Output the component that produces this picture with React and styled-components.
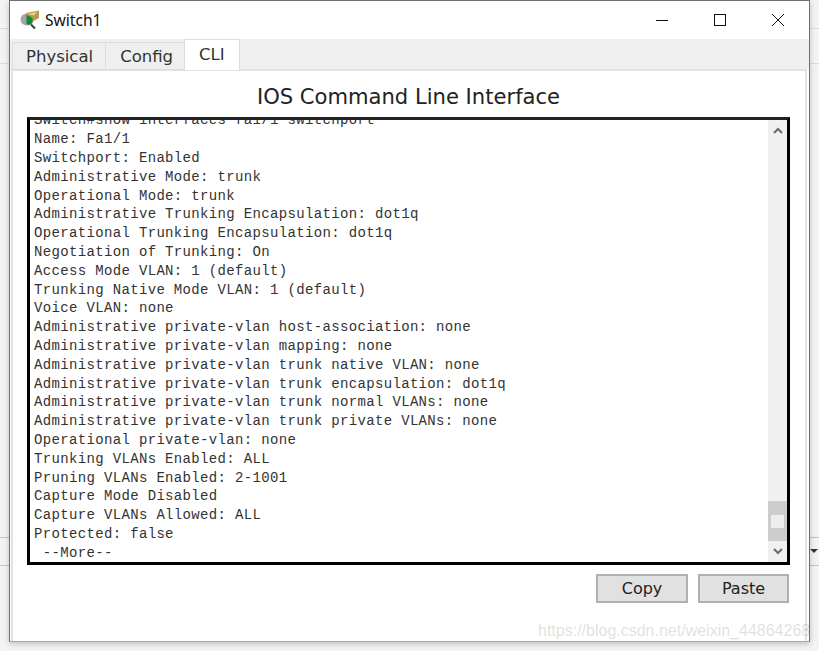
import React from 'react';
import styled, { createGlobalStyle } from 'styled-components';

const CLI_LINES = [
  'Name: Fa1/1',
  'Switchport: Enabled',
  'Administrative Mode: trunk',
  'Operational Mode: trunk',
  'Administrative Trunking Encapsulation: dot1q',
  'Operational Trunking Encapsulation: dot1q',
  'Negotiation of Trunking: On',
  'Access Mode VLAN: 1 (default)',
  'Trunking Native Mode VLAN: 1 (default)',
  'Voice VLAN: none',
  'Administrative private-vlan host-association: none',
  'Administrative private-vlan mapping: none',
  'Administrative private-vlan trunk native VLAN: none',
  'Administrative private-vlan trunk encapsulation: dot1q',
  'Administrative private-vlan trunk normal VLANs: none',
  'Administrative private-vlan trunk private VLANs: none',
  'Operational private-vlan: none',
  'Trunking VLANs Enabled: ALL',
  'Pruning VLANs Enabled: 2-1001',
  'Capture Mode Disabled',
  'Capture VLANs Allowed: ALL',
  'Protected: false',
  ' --More--',
];

const TABS = [
  { name: 'Physical', left: 13, right: 12 },
  { name: 'Config', left: 14, right: 11 },
  { name: 'CLI', left: 14, right: 14 },
];

function App() {
  return (
    <Desktop>
      <GlobalStyle />
      <Window>
        <TitleBar>
          <WindowIcon />
          <TitleText>Switch1</TitleText>
          <WindowControls>
            <ControlBtn>
              <svg width="14" height="14" viewBox="0 0 14 14">
                <path d="M1 7.5h12" stroke="#111" strokeWidth="1" />
              </svg>
            </ControlBtn>
            <ControlBtn>
              <svg width="14" height="14" viewBox="0 0 14 14">
                <rect x="1.5" y="1.5" width="11" height="11" fill="none" stroke="#111" strokeWidth="1" />
              </svg>
            </ControlBtn>
            <ControlBtn>
              <svg width="14" height="14" viewBox="0 0 14 14">
                <path d="M1 1l12 12M13 1L1 13" stroke="#111" strokeWidth="1" />
              </svg>
            </ControlBtn>
          </WindowControls>
        </TitleBar>
        <TabStrip>
          {TABS.map(tab => (
            <Tab key={tab.name} $active={tab.name === 'CLI'} $left={tab.left} $right={tab.right}>
              {tab.name}
            </Tab>
          ))}
        </TabStrip>
        <Panel>
          <Heading>IOS Command Line Interface</Heading>
          <Terminal>
            <Output>
              <ClippedLine>Switch#show interfaces fa1/1 switchport</ClippedLine>
              {CLI_LINES.map((line, idx) => (
                <Line key={idx}>{line}</Line>
              ))}
            </Output>
            <ScrollBar>
              <ArrowBox>
                <svg width="10" height="7" viewBox="0 0 10 7">
                  <path d="M1 6l4-4 4 4" fill="none" stroke="#6a6a6a" strokeWidth="2" />
                </svg>
              </ArrowBox>
              <Track>
                <Thumb>
                  <Grip />
                </Thumb>
              </Track>
              <ArrowBox>
                <svg width="10" height="7" viewBox="0 0 10 7">
                  <path d="M1 1l4 4 4-4" fill="none" stroke="#6a6a6a" strokeWidth="2" />
                </svg>
              </ArrowBox>
            </ScrollBar>
          </Terminal>
          <ButtonRow>
            <ActionBtn $width={92}>Copy</ActionBtn>
            <ActionBtn $width={91}>Paste</ActionBtn>
          </ButtonRow>
        </Panel>
        <Watermark>https://blog.csdn.net/weixin_44864268</Watermark>
      </Window>
      <SideCaret />
    </Desktop>
  );
}

function WindowIcon() {
  return (
    <IconSvg width="20" height="20" viewBox="0 0 20 20">
      <ellipse cx="7" cy="9.5" rx="6.5" ry="6" fill="#a3a3a3" />
      <path d="M11 14.5l4 4" stroke="#3f3f3f" strokeWidth="2" />
      <path d="M6 3l13-2.5v7.5l-8 4.5z" fill="#b99a4c" />
      <path d="M7 4l10-2-3 3.5z" fill="#e6d48d" />
      <path d="M6.5 4.5l6 3.5v5l-3 2-3-1z" fill="#14873a" />
    </IconSvg>
  );
}

export default App;

const GlobalStyle = createGlobalStyle`
  html, body {
    margin: 0;
    padding: 0;
    background: #f3f3f3;
  }
`;

const Desktop = styled.div`
  position: relative;
  width: 819px;
  height: 651px;
  overflow: hidden;
  padding: 0 0 0 9px;
  box-sizing: border-box;
  background:
    linear-gradient(#dcdcdc, #dcdcdc) 0 28px / 100% 1px no-repeat,
    linear-gradient(#dcdcdc, #dcdcdc) 0 63px / 100% 1px no-repeat,
    linear-gradient(#c4c4c4, #c4c4c4) 0 537px / 100% 1px no-repeat,
    linear-gradient(#c4c4c4, #c4c4c4) 0 565px / 100% 1px no-repeat,
    #f4f4f4;
`;

const Window = styled.div`
  position: relative;
  width: 801px;
  height: 642px;
  box-sizing: border-box;
  border: 1px solid #6f6f6f;
  border-bottom-color: #a8a8a8;
  background: #fff;
  display: flex;
  flex-direction: column;
  overflow: hidden;
  box-shadow: 0 2px 6px rgba(0, 0, 0, 0.22);
`;

const TitleBar = styled.div`
  height: 38px;
  flex: none;
  display: flex;
  align-items: center;
  padding-left: 10px;
  background: #fff;
`;

const IconSvg = styled.svg`
  flex: none;
  margin-right: 5px;
`;

const TitleText = styled.span`
  font-family: 'Noto Sans', sans-serif;
  font-size: 15.6px;
  color: #111;
`;

const WindowControls = styled.div`
  margin-left: auto;
  display: flex;
  padding-right: 2px;
`;

const ControlBtn = styled.div`
  width: 58px;
  height: 38px;
  display: flex;
  align-items: center;
  justify-content: center;
`;

const TabStrip = styled.div`
  height: 31px;
  flex: none;
  display: flex;
  align-items: flex-end;
  padding-left: 2px;
  background: #efefef;
`;

const Tab = styled.div`
  box-sizing: border-box;
  height: ${p => (p.$active ? '31px' : '28px')};
  padding: ${p => (p.$active ? '0 0 1px' : '0 0 0')};
  padding-top: ${p => (p.$active ? '0' : '1px')};
  padding-left: ${p => p.$left}px;
  padding-right: ${p => p.$right}px;
  display: flex;
  align-items: center;
  font-family: 'DejaVu Sans', sans-serif;
  font-size: 16.5px;
  color: #333;
  background: ${p => (p.$active ? '#fff' : '#efefef')};
  border: 1px solid #dcdcdc;
  border-bottom: ${p => (p.$active ? 'none' : '1px solid #dcdcdc')};
  margin-right: -1px;
  position: relative;
  z-index: ${p => (p.$active ? 1 : 0)};
`;

const Panel = styled.div`
  flex: 1;
  min-height: 0;
  box-sizing: border-box;
  margin: -1px 2px 0 1px;
  border: 2px solid #e2e2e2;
  border-bottom: none;
  background: #fff;
  padding: 0 0 0 14px;
  display: flex;
  flex-direction: column;
`;

const Heading = styled.h1`
  width: 763px;
  margin: 0;
  height: 46px;
  line-height: 51px;
  text-align: center;
  font-family: 'DejaVu Sans', sans-serif;
  font-weight: normal;
  font-size: 21.1px;
  color: #222;
`;

const Terminal = styled.div`
  width: 763px;
  height: 448px;
  box-sizing: border-box;
  border: 3px solid #000;
  border-top-color: #222;
  display: flex;
  background: #fff;
  overflow: hidden;
`;

const Output = styled.div`
  flex: 1;
  min-width: 0;
  padding-left: 4px;
  overflow: hidden;
`;

const Line = styled.div`
  height: 18.81px;
  line-height: 18.81px;
  white-space: pre;
  font-family: 'Liberation Mono', monospace;
  font-size: 14px;
  letter-spacing: 0.34px;
  color: #333;
`;

const ClippedLine = styled(Line)`
  margin-top: -8.6px;
`;

const ScrollBar = styled.div`
  flex: none;
  width: 19px;
  display: flex;
  flex-direction: column;
  background: #f0f0f0;
`;

const ArrowBox = styled.div`
  flex: none;
  height: 21px;
  display: flex;
  align-items: center;
  justify-content: center;
`;

const Track = styled.div`
  flex: 1;
  display: flex;
  flex-direction: column;
  justify-content: flex-end;
`;

const Thumb = styled.div`
  height: 40px;
  background: #cdcdcd;
  display: flex;
  align-items: center;
  justify-content: center;
`;

const Grip = styled.div`
  width: 13px;
  height: 13px;
  background: #eeeeee;
`;

const ButtonRow = styled.div`
  width: 762px;
  display: flex;
  justify-content: flex-end;
  gap: 10px;
  margin-top: 9px;
`;

const ActionBtn = styled.button`
  width: ${p => p.$width}px;
  height: 29px;
  padding: 0;
  box-sizing: border-box;
  border: 2px solid #b0b0b0;
  background: #e1e1e1;
  font-family: 'DejaVu Sans', sans-serif;
  font-size: 16px;
  color: #222;
`;

const Watermark = styled.div`
  position: absolute;
  left: 528px;
  top: 621px;
  white-space: nowrap;
  font-family: 'Liberation Sans', sans-serif;
  font-size: 16px;
  color: rgba(120, 120, 120, 0.24);
`;

const SideCaret = styled.div`
  position: absolute;
  left: 810px;
  top: 549px;
  width: 0;
  height: 0;
  border-left: 4px solid transparent;
  border-right: 4px solid transparent;
  border-top: 4px solid #333;
`;
